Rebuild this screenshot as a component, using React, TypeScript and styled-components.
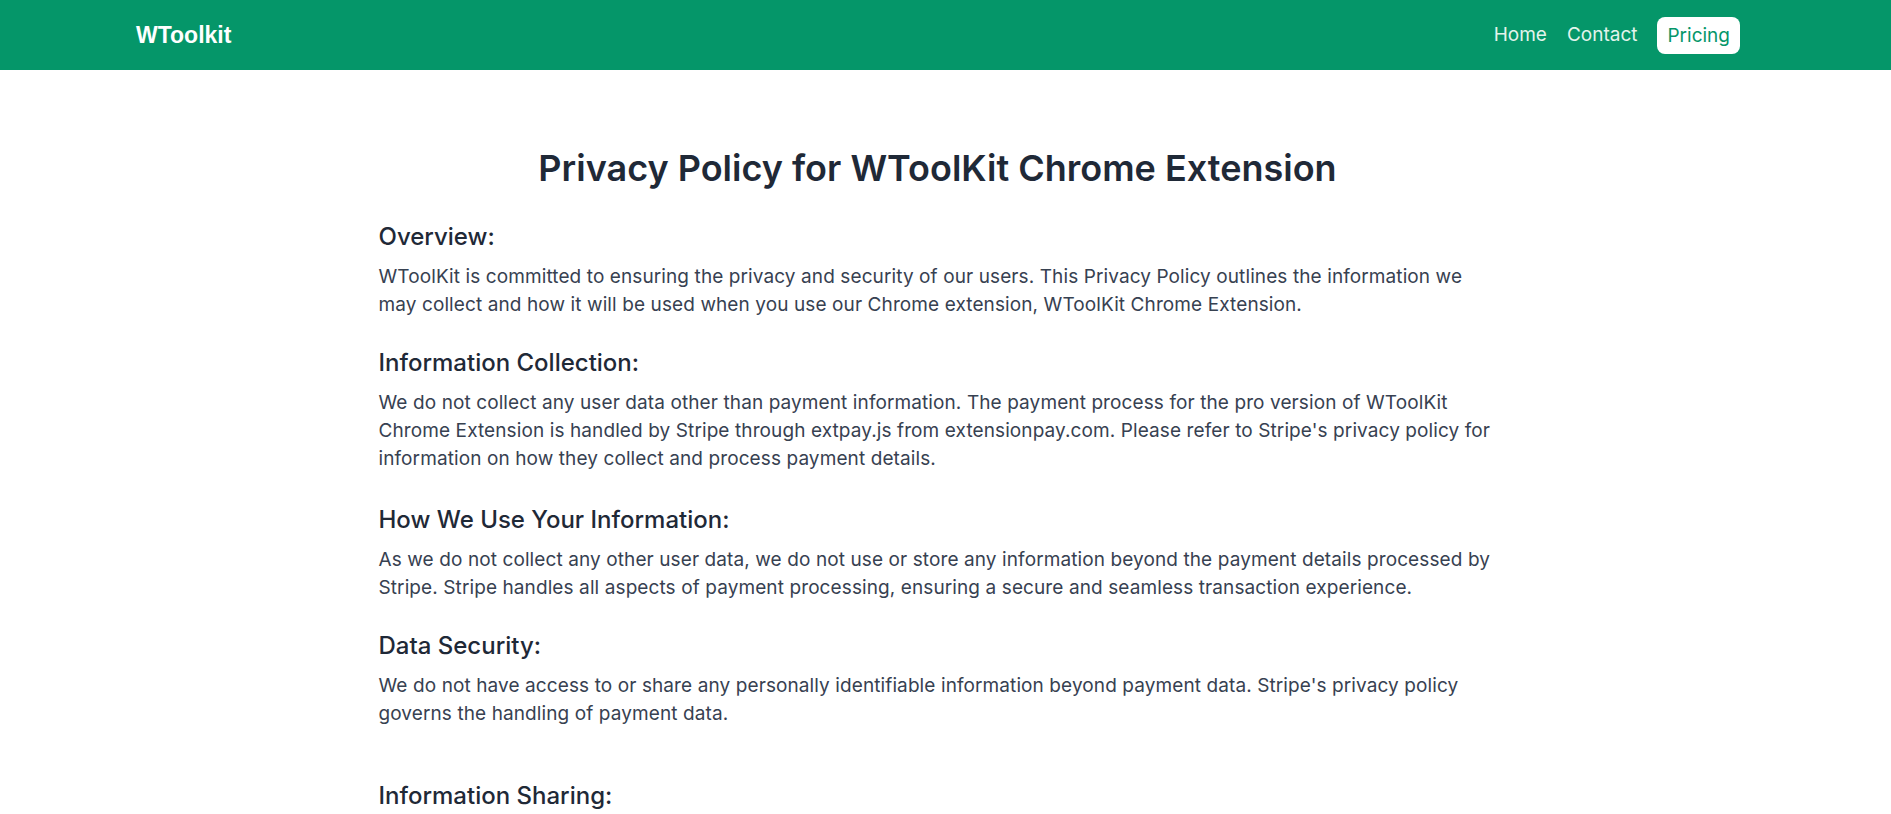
import React from 'react';
import styled, { createGlobalStyle } from 'styled-components';

const GlobalStyle = createGlobalStyle`
  html, body {
    margin: 0;
    padding: 0;
    background: #ffffff;
    font-family: Inter, "Noto Sans", sans-serif;
  }

  ::-webkit-scrollbar {
    width: 4px;
  }

  ::-webkit-scrollbar-track {
    background: #f1f1f1;
  }

  ::-webkit-scrollbar-thumb {
    background: #d6d6d6;
  }
`;

const Header = styled.header`
  height: 70px;
  background: #059669;
  display: flex;
  align-items: center;
  justify-content: space-between;
  padding: 0 151px 0 136px;
`;

const Logo = styled.a`
  font-family: "Liberation Sans", Arial, sans-serif;
  font-weight: 700;
  font-size: 23px;
  color: #ffffff;
  text-decoration: none;
`;

const Nav = styled.nav`
  display: flex;
  align-items: center;
  gap: 20px;
`;

const NavLink = styled.a<{ $active?: boolean }>`
  font-size: 19px;
  line-height: 28px;
  text-decoration: none;
  color: ${({ $active }) => ($active ? '#059669' : '#e3f4ec')};
  background: ${({ $active }) => ($active ? '#ffffff' : 'transparent')};
  border-radius: 8px;
  padding: ${({ $active }) => ($active ? '5px 10px 4px' : '0')};
`;

const Main = styled.main`
  max-width: 1134px;
  margin: 0 auto;
  padding: 78px 16px 80px 0;
  box-sizing: border-box;
  color: #374151;
`;

const Title = styled.h1`
  margin: 0 0 33px;
  text-align: center;
  font-size: 36px;
  line-height: 40px;
  font-weight: 600;
  color: #1f2937;
`;

const Section = styled.section<{ $gap: number }>`
  margin-bottom: ${({ $gap }) => $gap}px;
`;

const Heading = styled.h2`
  margin: 0 0 10px;
  font-size: 24px;
  line-height: 32px;
  font-weight: 500;
  color: #1f2937;
`;

const Paragraph = styled.p`
  margin: 0;
  font-size: 19px;
  line-height: 28px;
  letter-spacing: 0.1px;
  color: #374151;
`;

const sections = [
  {
    title: 'Overview:',
    body: 'WToolKit is committed to ensuring the privacy and security of our users. This Privacy Policy outlines the information we may collect and how it will be used when you use our Chrome extension, WToolKit Chrome Extension.',
    gap: 28,
  },
  {
    title: 'Information Collection:',
    body: "We do not collect any user data other than payment information. The payment process for the pro version of WToolKit Chrome Extension is handled by Stripe through extpay.js from extensionpay.com. Please refer to Stripe's privacy policy for information on how they collect and process payment details.",
    gap: 31,
  },
  {
    title: 'How We Use Your Information:',
    body: 'As we do not collect any other user data, we do not use or store any information beyond the payment details processed by Stripe. Stripe handles all aspects of payment processing, ensuring a secure and seamless transaction experience.',
    gap: 28,
  },
  {
    title: 'Data Security:',
    body: "We do not have access to or share any personally identifiable information beyond payment data. Stripe's privacy policy governs the handling of payment data.",
    gap: 52,
  },
  {
    title: 'Information Sharing:',
    body: 'We do not sell, trade, or otherwise transfer any user information to third parties. Payment information is shared only with Stripe for the purpose of processing payments for the pro version of WToolKit Chrome Extension.',
    gap: 29,
  },
  {
    title: 'Third-Party Services:',
    body: 'WToolKit Chrome Extension uses extpay.js from extensionpay.com to manage payments. These services have their own privacy policies, and we encourage you to review them to understand how your information is handled.',
    gap: 29,
  },
  {
    title: 'Changes to This Privacy Policy:',
    body: 'We may update this Privacy Policy from time to time. Any changes will be posted on this page, and the updated policy will be effective immediately upon posting.',
    gap: 29,
  },
  {
    title: 'Contact Us:',
    body: 'If you have any questions or concerns about this Privacy Policy, please contact us through the contact page on our website.',
    gap: 29,
  },
];

export default function App() {
  return (
    <>
      <GlobalStyle />
      <Header>
        <Logo href="#">WToolkit</Logo>
        <Nav>
          <NavLink href="#">Home</NavLink>
          <NavLink href="#">Contact</NavLink>
          <NavLink href="#" $active>
            Pricing
          </NavLink>
        </Nav>
      </Header>
      <Main>
        <Title>Privacy Policy for WToolKit Chrome Extension</Title>
        {sections.map((s) => (
          <Section key={s.title} $gap={s.gap}>
            <Heading>{s.title}</Heading>
            <Paragraph>{s.body}</Paragraph>
          </Section>
        ))}
      </Main>
    </>
  );
}
